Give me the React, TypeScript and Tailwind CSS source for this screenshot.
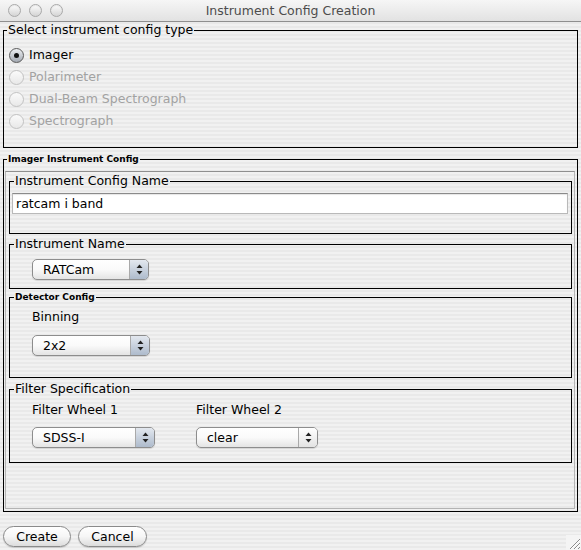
import React from 'react';

const stripes =
  'bg-[repeating-linear-gradient(180deg,#f1f1f1_0px,#f1f1f1_2px,#e9e9e9_2px,#e9e9e9_4px)]';

function Light() {
  return (
    <span className="block h-[13px] w-[13px] rounded-full border border-[#a9a9a9] bg-gradient-to-b from-[#fdfdfd] to-[#d4d4d4] shadow-[inset_0_1px_1px_rgba(0,0,0,0.08)]" />
  );
}

function Radio({ label, checked, disabled }: { label: string; checked?: boolean; disabled?: boolean }) {
  return (
    <div className="flex h-[22px] items-center gap-[5px]">
      {checked ? (
        <span className="flex h-[15px] w-[15px] items-center justify-center rounded-full border border-[#5a5a5a] bg-gradient-to-b from-[#eef0f3] to-[#a3a9b2]">
          <span className="h-[5px] w-[5px] rounded-full bg-[#111]" />
        </span>
      ) : (
        <span className="h-[15px] w-[15px] rounded-full border border-[#c2c2c2] bg-gradient-to-b from-[#fbfbfb] to-[#e8e8e8]" />
      )}
      <span className={disabled ? 'text-[#a2a2a2]' : 'text-black'}>{label}</span>
    </div>
  );
}

function Arrows() {
  return (
    <svg width="7" height="11" viewBox="0 0 7 11">
      <path d="M3.5 0.5 L6.5 4 L0.5 4 Z" fill="#222" />
      <path d="M3.5 10.5 L6.5 7 L0.5 7 Z" fill="#222" />
    </svg>
  );
}

function Popup({ value, width, light }: { value: string; width: string; light?: boolean }) {
  return (
    <div
      className={`flex h-[21px] items-stretch rounded-[5px] border border-[#8d8d8d] bg-gradient-to-b from-white via-[#fafafa] to-[#e4e4e4] shadow-[0_1px_1px_rgba(0,0,0,0.12)] ${width}`}
    >
      <span className="flex-1 pl-[10px] leading-[19px] text-black">{value}</span>
      <span
        className={`flex w-[19px] items-center justify-center rounded-r-[4px] border-l border-[#a9a9a9] bg-gradient-to-b ${
          light ? 'from-[#ffffff] to-[#e3e3e3]' : 'from-[#e3e8ef] to-[#aebbcc]'
        }`}
      >
        <Arrows />
      </span>
    </div>
  );
}

function Button({ label, width }: { label: string; width: string }) {
  return (
    <button
      className={`h-[21px] rounded-full border border-[#8a8a8a] bg-gradient-to-b from-white via-[#f6f6f6] to-[#dcdcdc] text-center leading-[19px] text-black shadow-[0_1px_1px_rgba(0,0,0,0.15)] ${width}`}
    >
      {label}
    </button>
  );
}

export default function App() {
  return (
    <div
      className={`flex h-[550px] w-[581px] flex-col overflow-hidden font-['DejaVu_Sans',sans-serif] text-[12.5px] ${stripes}`}
    >
      {/* title bar */}
      <div className="grid h-[22px] shrink-0 grid-cols-[1fr_auto_1fr] items-center border-b border-[#8f8f8f] bg-gradient-to-b from-[#f6f6f6] to-[#e2e2e2]">
        <div className="flex gap-[8px] pl-[8px]">
          <Light />
          <Light />
          <Light />
        </div>
        <div className="text-[12.5px] leading-[16px] text-[#4c4c4c]">Instrument Config Creation</div>
        <div />
      </div>

      <div className="flex flex-1 flex-col px-[3px]">
        {/* config type */}
        <fieldset className="border border-black pb-[15px] pl-[5px] pt-[6px]">
          <legend className="-ml-[2px] px-[1px] leading-[16px]">Select instrument config type</legend>
          <Radio label="Imager" checked />
          <Radio label="Polarimeter" disabled />
          <Radio label="Dual-Beam Spectrograph" disabled />
          <Radio label="Spectrograph" disabled />
        </fieldset>

        {/* imager config */}
        <fieldset className="mt-[4px] border border-black pb-[2px] pl-[1px] pr-[2px]">
          <legend className="ml-[2px] px-[1px] text-[9px] font-bold leading-[14px]">Imager Instrument Config</legend>
          <div className="mt-[5px] flex h-[338px] flex-col border border-[#b4b4b4] border-t-[#8f8f8f] pl-[3px] pr-[2px] pt-[1px]">
            <fieldset className="border border-black pb-[19px] pl-[2px] pr-[3px]">
              <legend className="ml-[2px] px-[1px] leading-[16px]">Instrument Config Name</legend>
              <div className="mt-[4px] h-[21px] border border-[#b9b9b9] border-t-[#8a8a8a] bg-white pl-[3px] leading-[19px] shadow-[inset_0_1px_1px_rgba(0,0,0,0.1)]">
                ratcam i band
              </div>
            </fieldset>

            <fieldset className="mt-[2px] border border-black pb-[8px] pl-[22px]">
              <legend className="-ml-[18px] px-[1px] leading-[16px]">Instrument Name</legend>
              <div className="mt-[7px]">
                <Popup value="RATCam" width="w-[117px]" />
              </div>
            </fieldset>

            <fieldset className="mt-[1px] border border-black pb-[21px] pl-[22px]">
              <legend className="-ml-[18px] px-[1px] text-[9px] font-bold leading-[14px]">Detector Config</legend>
              <div className="mt-[5px] leading-[16px]">Binning</div>
              <div className="mt-[10px]">
                <Popup value="2x2" width="w-[118px]" />
              </div>
            </fieldset>

            <fieldset className="mt-[3px] border border-black pb-[14px] pl-[22px]">
              <legend className="-ml-[18px] px-[1px] leading-[16px]">Filter Specification</legend>
              <div className="mt-[5px] flex gap-[41px]">
                <div className="flex w-[123px] flex-col gap-[9px]">
                  <span className="leading-[16px]">Filter Wheel 1</span>
                  <Popup value="SDSS-I" width="w-[123px]" />
                </div>
                <div className="flex w-[122px] flex-col gap-[9px]">
                  <span className="leading-[16px]">Filter Wheel 2</span>
                  <Popup value="clear" width="w-[122px]" light />
                </div>
              </div>
            </fieldset>
          </div>
        </fieldset>

        {/* buttons */}
        <div className="mt-[14px] flex flex-1 items-start gap-[7px]">
          <Button label="Create" width="w-[68px]" />
          <Button label="Cancel" width="w-[69px]" />
          <div className="-mr-[3px] ml-auto self-end">
            <svg width="15" height="15" viewBox="0 0 15 15">
              <rect x="0" y="0" width="15" height="15" fill="#f4f4f4" />
              <path d="M14 4 L4 14 M14 8 L8 14 M14 12 L12 14" stroke="#8a8a8a" strokeWidth="1" />
              <path d="M14 5 L5 14 M14 9 L9 14" stroke="#ffffff" strokeWidth="1" />
            </svg>
          </div>
        </div>
      </div>
    </div>
  );
}
